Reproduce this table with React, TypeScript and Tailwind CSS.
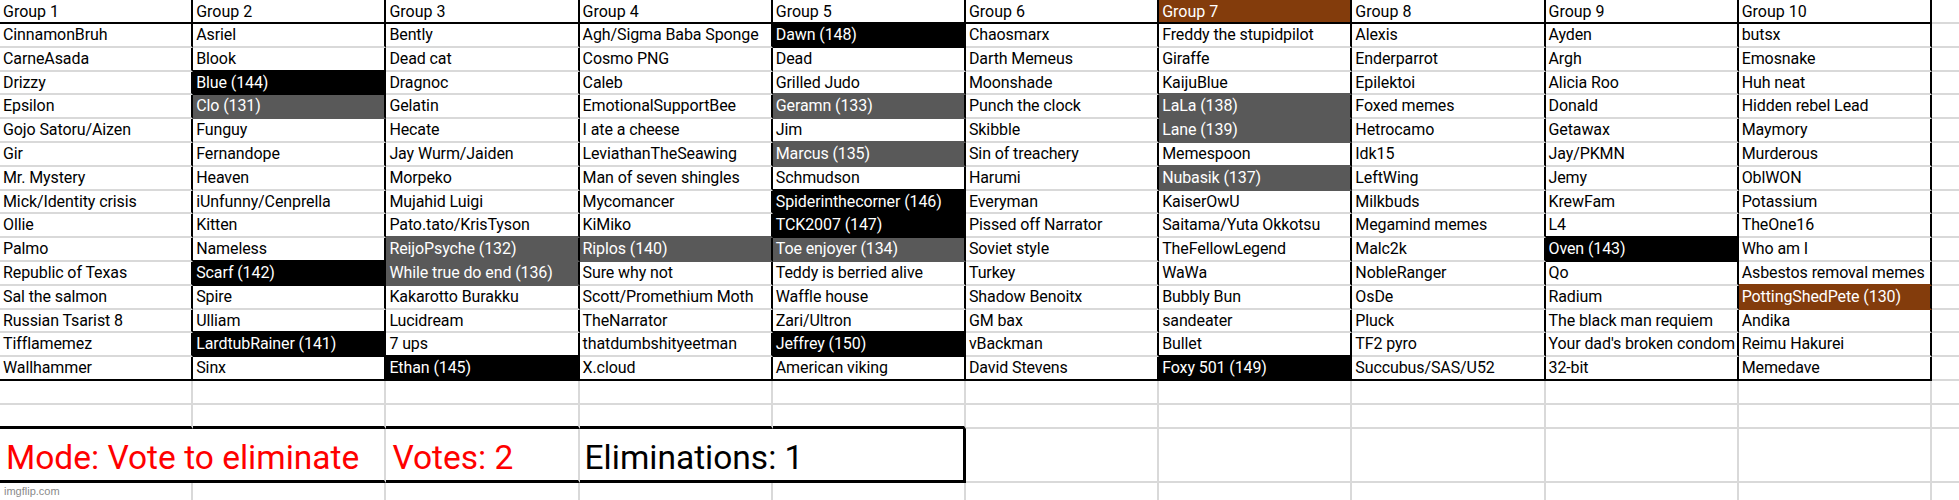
import React from 'react';

const cols: string[][] = [
  ['CinnamonBruh', 'CarneAsada', 'Drizzy', 'Epsilon', 'Gojo Satoru/Aizen', 'Gir', 'Mr. Mystery', 'Mick/Identity crisis', 'Ollie', 'Palmo', 'Republic of Texas', 'Sal the salmon', 'Russian Tsarist 8', 'Tifflamemez', 'Wallhammer'],
  ['Asriel', 'Blook', 'k|Blue (144)', 'g|Clo (131)', 'Funguy', 'Fernandope', 'Heaven', 'iUnfunny/Cenprella', 'Kitten', 'Nameless', 'k|Scarf (142)', 'Spire', 'Ulliam', 'k|LardtubRainer (141)', 'Sinx'],
  ['Bently', 'Dead cat', 'Dragnoc', 'Gelatin', 'Hecate', 'Jay Wurm/Jaiden', 'Morpeko', 'Mujahid Luigi', 'Pato.tato/KrisTyson', 'g|ReijoPsyche (132)', 'g|While true do end (136)', 'Kakarotto Burakku', 'Lucidream', '7 ups', 'k|Ethan (145)'],
  ['Agh/Sigma Baba Sponge', 'Cosmo PNG', 'Caleb', 'EmotionalSupportBee', 'I ate a cheese', 'LeviathanTheSeawing', 'Man of seven shingles', 'Mycomancer', 'KiMiko', 'g|Riplos (140)', 'Sure why not', 'Scott/Promethium Moth', 'TheNarrator', 'thatdumbshityeetman', 'X.cloud'],
  ['k|Dawn (148)', 'Dead', 'Grilled Judo', 'g|Geramn (133)', 'Jim', 'g|Marcus (135)', 'Schmudson', 'k|Spiderinthecorner (146)', 'k|TCK2007 (147)', 'g|Toe enjoyer (134)', 'Teddy is berried alive', 'Waffle house', 'Zari/Ultron', 'k|Jeffrey (150)', 'American viking'],
  ['Chaosmarx', 'Darth Memeus', 'Moonshade', 'Punch the clock', 'Skibble', 'Sin of treachery', 'Harumi', 'Everyman', 'Pissed off Narrator', 'Soviet style', 'Turkey', 'Shadow Benoitx', 'GM bax', 'vBackman', 'David Stevens'],
  ['Freddy the stupidpilot', 'Giraffe', 'KaijuBlue', 'g|LaLa (138)', 'g|Lane (139)', 'Memespoon', 'g|Nubasik (137)', 'KaiserOwU', 'Saitama/Yuta Okkotsu', 'TheFellowLegend', 'WaWa', 'Bubbly Bun', 'sandeater', 'Bullet', 'k|Foxy 501 (149)'],
  ['Alexis', 'Enderparrot', 'Epilektoi', 'Foxed memes', 'Hetrocamo', 'Idk15', 'LeftWing', 'Milkbuds', 'Megamind memes', 'Malc2k', 'NobleRanger', 'OsDe', 'Pluck', 'TF2 pyro', 'Succubus/SAS/U52'],
  ['Ayden', 'Argh', 'Alicia Roo', 'Donald', 'Getawax', 'Jay/PKMN', 'Jemy', 'KrewFam', 'L4', 'k|Oven (143)', 'Qo', 'Radium', 'The black man requiem', "Your dad's broken condom", '32-bit'],
  ['butsx', 'Emosnake', 'Huh neat', 'Hidden rebel Lead', 'Maymory', 'Murderous', 'OblWON', 'Potassium', 'TheOne16', 'Who am I', 'Asbestos removal memes', 'b|PottingShedPete (130)', 'Andika', 'Reimu Hakurei', 'Memedave'],
];

type Fill = 'k' | 'g' | 'b' | undefined;

const parse = (s: string): { t: string; f: Fill } => {
  if (s.startsWith('k|')) return { t: s.slice(2), f: 'k' };
  if (s.startsWith('g|')) return { t: s.slice(2), f: 'g' };
  if (s.startsWith('b|')) return { t: s.slice(2), f: 'b' };
  return { t: s, f: undefined };
};

const bg: Record<string, string> = {
  k: 'bg-black text-white',
  g: 'bg-[#595959] text-white',
  b: 'bg-[#833c0c] text-white',
};
const bb: Record<string, string> = {
  k: 'border-b-black',
  g: 'border-b-[#595959]',
  b: 'border-b-[#833c0c]',
};

const W = 'w-[193.2px] flex-none';
const GRAY_B = 'border-b-2 border-b-[#d9d9d9]';
const GRAY_R = 'border-r-2 border-r-[#d9d9d9]';
const BLACK_R = 'border-r-2 border-r-black';

export default function App() {
  const idx = Array.from({ length: 10 }, (_, i) => i);
  return (
    <div className="w-[1959px] h-[500px] overflow-hidden bg-white text-black font-[Roboto,sans-serif]">
      {/* Header */}
      <div className="flex h-[24px]">
        {idx.map((c) => (
          <div
            key={c}
            className={`${W} h-full ${BLACK_R} border-b-2 border-b-black pl-[3px] pt-[3px] text-[16px] leading-[18px] whitespace-nowrap overflow-hidden ${c === 6 ? 'bg-[#833c0c] text-white' : ''}`}
          >
            Group {c + 1}
          </div>
        ))}
        <div className={`flex-1 h-full ${GRAY_B}`} />
      </div>

      {/* Data rows */}
      {Array.from({ length: 15 }, (_, r) => (
        <div key={r} className="flex h-[23.8px]">
          {idx.map((c) => {
            const cell = parse(cols[c][r]);
            const below = r < 14 ? parse(cols[c][r + 1]) : null;
            let bcol = 'border-b-[#d9d9d9]';
            if (r === 14) bcol = 'border-b-black';
            else if (cell.f) bcol = bb[cell.f];
            else if (below && below.f) bcol = bb[below.f];
            return (
              <div
                key={c}
                className={`${W} h-full ${BLACK_R} border-b-2 ${bcol} pl-[3px] pt-[2px] text-[16px] leading-[18px] tracking-[-0.1px] whitespace-nowrap overflow-hidden ${cell.f ? bg[cell.f] : ''}`}
              >
                {cell.t}
              </div>
            );
          })}
          <div className={`flex-1 h-full ${GRAY_B}`} />
        </div>
      ))}

      {/* Empty row 1 */}
      <div className="flex h-[24px]">
        {idx.map((c) => (
          <div key={c} className={`${W} h-full ${GRAY_R} ${GRAY_B}`} />
        ))}
        <div className={`flex-1 h-full ${GRAY_B}`} />
      </div>

      {/* Empty row 2 (box top edge) */}
      <div className="flex h-[24px]">
        {idx.map((c) => (
          <div
            key={c}
            className={`${W} h-full ${GRAY_R} ${c < 5 ? 'border-b-[3px] border-b-black' : GRAY_B}`}
          />
        ))}
        <div className={`flex-1 h-full ${GRAY_B}`} />
      </div>

      {/* Box row */}
      <div className="flex h-[54.5px]">
        <div className={`${W} h-full border-b-[3px] border-b-black pl-[6px] pt-[9px] text-[33.5px] leading-[40px] text-[#ff0000] whitespace-nowrap`}>
          Mode: Vote to eliminate
        </div>
        <div className={`${W} h-full border-b-[3px] border-b-black ${GRAY_R}`} />
        <div className={`${W} h-full border-b-[3px] border-b-black ${GRAY_R} pl-[6px] pt-[9px] text-[33.5px] leading-[40px] text-[#ff0000] whitespace-nowrap`}>
          Votes: 2
        </div>
        <div className={`${W} h-full border-b-[3px] border-b-black pl-[5px] pt-[9px] text-[33.5px] leading-[40px] text-black whitespace-nowrap`}>
          Eliminations: 1
        </div>
        <div className={`${W} h-full border-b-[3px] border-b-black border-r-[3px] border-r-black`} />
        {idx.slice(5).map((c) => (
          <div key={c} className={`${W} h-full ${GRAY_R} ${GRAY_B}`} />
        ))}
        <div className={`flex-1 h-full ${GRAY_B}`} />
      </div>

      {/* Last row with watermark */}
      <div className="flex h-[16.5px]">
        <div className={`${W} h-full ${GRAY_R} pl-[4px] pt-[2px] font-['Liberation_Sans',Arial,sans-serif] text-[11px] leading-[13px] text-[#8a8a8a] whitespace-nowrap`}>
          imgflip.com
        </div>
        {idx.slice(1).map((c) => (
          <div key={c} className={`${W} h-full ${GRAY_R}`} />
        ))}
        <div className="flex-1 h-full" />
      </div>
    </div>
  );
}
